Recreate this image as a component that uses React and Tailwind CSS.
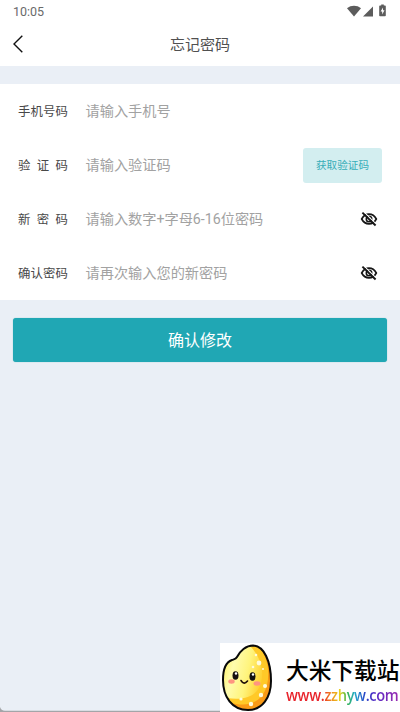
import React from "react";

const fields = [
  { label: "手机号码", hint: "请输入手机号" },
  { label: "验证码", hint: "请输入验证码", code: true },
  { label: "新密码", hint: "请输入数字+字母6-16位密码", hidden: true },
  { label: "确认密码", hint: "请再次输入您的新密码", hidden: true },
];

function StatusIcons() {
  return (
    <svg className="mr-[-1px] h-[14px] w-[42px]" viewBox="0 0 42 14" fill="#5c5c5c">
      <path d="M1 4.200C5 .9 11 .9 15 4.200L8 12.500Z" />
      <path d="M17 12.500L27 2.500V12.500Z" />
      <path
        fillRule="evenodd"
        d="M34 1.500h1.200V.4h2.600v1.100H39q.8 0 .8.8v9.100q0 .8-.8.8h-5q-.8 0-.8-.8V2.300q0-.8.8-.8ZM37 3.400L34.600 7.500H36.200V10.600L38.500 6.300H37Z"
      />
    </svg>
  );
}

function EyeOff() {
  return (
    <svg className="h-4 w-[18px]" viewBox="0 0 18 16" fill="none" stroke="#161616">
      <path d="M1.700 8C3.500 4.600 6 3.200 9 3.200S14.500 4.600 16.300 8C14.500 11.400 12 12.800 9 12.800S3.500 11.400 1.700 8Z" strokeWidth="1.700" />
      <circle cx="9" cy="8" r="2.700" strokeWidth="1.600" />
      <path d="M4.100 1.100L16.500 13.300" stroke="#fff" strokeWidth="1.100" />
      <path d="M2.400 1.600L15.600 14.500" strokeWidth="1.900" />
    </svg>
  );
}

function Mascot() {
  return (
    <svg className="mt-px h-[68px] w-[52px] shrink-0" viewBox="0 0 52 68">
      <defs>
        <linearGradient id="grain" x1="0" y1="0.3" x2="1" y2="0.6">
          <stop offset="0" stopColor="#fff15a" />
          <stop offset="0.3" stopColor="#fffcae" />
          <stop offset="0.65" stopColor="#fff47c" />
          <stop offset="1" stopColor="#ffd030" />
        </linearGradient>
        <clipPath id="body">
          <path d="M16 13C19 7 25 1.500 32 1.500C43 2 50 17 50 37C50 54 41 66 27 66C11 66 2 53 2 36C2 26 5 18 11 16C14 15 15 15 16 13Z" />
        </clipPath>
      </defs>
      <g clipPath="url(#body)">
        <path fill="#f99a16" d="M0 0h52v68H0z" />
        <path fill="#ffc928" d="M0 0H36C47 13 49 27 46 41C42 57 28 65 8 58L0 50Z" />
        <path fill="url(#grain)" d="M0 0H27C38 10 44 25 40 39C37 51 25 57 6 54L0 45Z" />
        <g fill="#fffbdc">
          <circle cx="38" cy="19" r="2.400" />
          <circle cx="32" cy="23" r="1.300" />
          <circle cx="35" cy="11" r="1.300" />
          <circle cx="44" cy="42" r="2" />
          <circle cx="40" cy="51" r="2.200" />
          <circle cx="30" cy="60" r="2.200" />
          <circle cx="20" cy="55" r="1.600" />
          <circle cx="42" cy="25" r="1" />
        </g>
      </g>
      <path fill="none" stroke="#090909" strokeWidth="2" d="M16 13C19 7 25 1.500 32 1.500C43 2 50 17 50 37C50 54 41 66 27 66C11 66 2 53 2 36C2 26 5 18 11 16C14 15 15 15 16 13Z" />
      <ellipse cx="10.500" cy="37.500" rx="3.200" ry="2.200" fill="#ff9580" />
      <ellipse cx="36" cy="39.500" rx="3.500" ry="2.200" fill="#ff9580" />
      <ellipse cx="14.500" cy="31.500" rx="3" ry="4.300" fill="#151010" />
      <ellipse cx="31.500" cy="32.500" rx="3" ry="4.300" fill="#151010" />
      <circle cx="15" cy="29.500" r="1.200" fill="#fff" />
      <circle cx="32" cy="30.500" r="1.200" fill="#fff" />
      <path d="M20 36.500Q23 41.500 26.500 37" fill="none" stroke="#201008" strokeWidth="1.600" strokeLinecap="round" />
    </svg>
  );
}

export default function App() {
  return (
    <div className="relative flex h-[712px] w-[400px] flex-col overflow-hidden bg-[#eaeff6] font-[Roboto,'Noto_Sans_CJK_SC',sans-serif]">
      <div className="flex h-[22px] shrink-0 items-center justify-between bg-white pr-[13px] pl-[13px] text-[12.500px] text-[#6a6a6a]">
        <span className="pt-[2px]">10:05</span>
        <StatusIcons />
      </div>
      <header className="grid h-11 shrink-0 grid-cols-[1fr_auto_1fr] items-center bg-white px-[13px]">
        <svg className="h-[18px] w-[10px]" viewBox="0 0 10 18" fill="none" stroke="#111" strokeWidth="1.400">
          <path d="M9.300.7L1 9L9.300 17.300" />
        </svg>
        <h1 className="pt-[2px] text-[15px] text-[#505050]">忘记密码</h1>
      </header>

      <main className="mt-[18px] flex shrink-0 flex-col bg-white">
        {fields.map((f) => (
          <div key={f.label} className="flex h-[54px] items-center pr-[18px] pl-[18px]">
            <div className="flex w-[50px] justify-between pt-[2px] text-[12.400px] text-[#484848]">
              {[...f.label].map((c, i) => (
                <span key={i}>{c}</span>
              ))}
            </div>
            <div className="ml-[17.500px] flex-1 pt-[2px] text-[14.200px] whitespace-nowrap text-[#a2a2a2]">{f.hint}</div>
            {f.code && (
              <button className="h-[35px] w-[79px] rounded-[3px] bg-[#d3eef0] pt-px text-[10.600px] text-[#36adb8]">获取验证码</button>
            )}
            {f.hidden && (
              <span className="mr-1">
                <EyeOff />
              </span>
            )}
          </div>
        ))}
      </main>

      <button className="mx-[13px] mt-[18px] h-[44px] shrink-0 rounded-[3px] bg-[#20a7b4] pt-[2px] text-[16px] text-white shadow-[0_0_1px_#5fb5bf]">确认修改</button>

      <svg className="absolute bottom-0 left-0 h-[6px] w-[220px]" viewBox="0 0 220 6" fill="#a3a5a8">
        <path d="M0 1Q1 4.700 5 4.700H220V6H0Z" />
      </svg>
      <aside className="absolute right-0 bottom-0 flex h-[69px] w-[180px] overflow-hidden bg-white pl-px">
        <Mascot />
        <div className="ml-[13px] flex flex-col items-start pt-[12px] whitespace-nowrap">
          <span className="font-['Noto_Sans_CJK_SC',sans-serif] text-[22.700px] leading-[30px] font-medium text-black">大米下载站</span>
          <span className="w-max origin-left scale-x-[0.86] bg-[linear-gradient(90deg,#e8232b_0%,#e8232b_32%,#f28a1e_40%,#e8d21c_48%,#39b54a_54%,#25aacb_61%,#2945c8_70%,#5a2bc5_80%,#9a2ab0_100%)] bg-clip-text font-['Open_Sans',sans-serif] text-[17px] leading-[20px] font-semibold tracking-[-0.400px] text-transparent">
            www.zzhyw.com
          </span>
        </div>
      </aside>
    </div>
  );
}
